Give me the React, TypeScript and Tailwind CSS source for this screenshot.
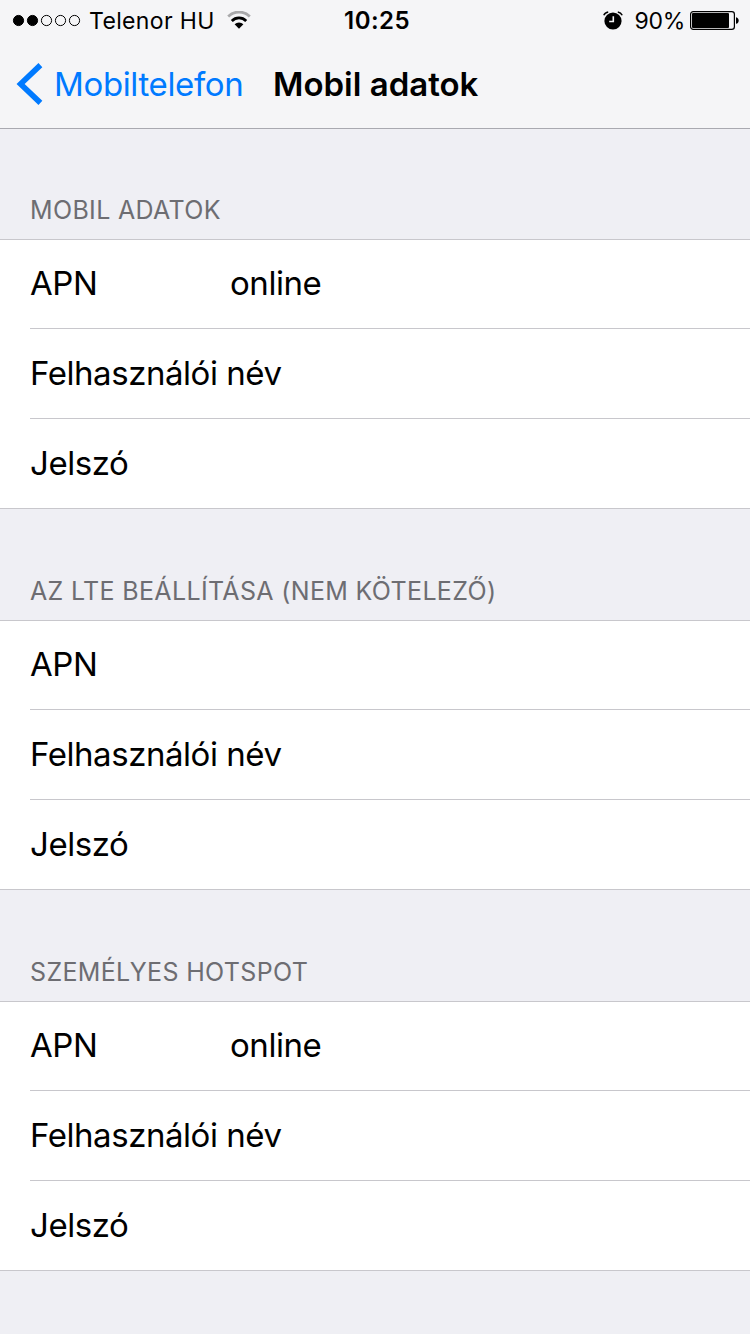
interface Row {
  label: string;
  value?: string;
}

interface Section {
  title: string;
  rows: Row[];
}

const sections: Section[] = [
  {
    title: 'Mobil adatok',
    rows: [{ label: 'APN', value: 'online' }, { label: 'Felhasználói név' }, { label: 'Jelszó' }],
  },
  {
    title: 'Az LTE beállítása (nem kötelező)',
    rows: [{ label: 'APN' }, { label: 'Felhasználói név' }, { label: 'Jelszó' }],
  },
  {
    title: 'Személyes hotspot',
    rows: [{ label: 'APN', value: 'online' }, { label: 'Felhasználói név' }, { label: 'Jelszó' }],
  },
];

function SignalDots() {
  return (
    <svg width="70" height="14" viewBox="0 0 70 14" className="shrink-0">
      {[0, 1, 2, 3, 4].map((i) => (
        <circle
          key={i}
          cx={6.5 + i * 14}
          cy="7.5"
          r="5.1"
          fill={i < 2 ? '#000' : 'none'}
          stroke="#000"
          strokeWidth="1"
        />
      ))}
    </svg>
  );
}

function WifiIcon() {
  return (
    <svg width="24" height="18" viewBox="0 0 24 18" fill="none" className="shrink-0">
      <path d="M1.2 5.4a15.6 15.6 0 0 1 21.6 0" stroke="#a9a9ab" strokeWidth="2.8" />
      <path d="M4.8 9.9a10.3 10.3 0 0 1 14.4 0" stroke="#000" strokeWidth="2.8" />
      <path d="M12 17.8 7.6 13.2a6.4 6.4 0 0 1 8.8 0Z" fill="#000" />
    </svg>
  );
}

function AlarmIcon() {
  return (
    <svg width="20" height="19" viewBox="0 0 20 19" fill="none" className="shrink-0">
      <circle cx="10" cy="10" r="8.6" fill="#000" />
      <path d="M10.3 5.2v5.3H6.2" stroke="#f5f5f7" strokeWidth="1.6" />
      <path d="M.8 4.3Q2 1.5 5.2 1M19.2 4.3Q18 1.5 14.8 1" stroke="#000" strokeWidth="1.5" />
    </svg>
  );
}

function BatteryIcon() {
  return (
    <svg width="50" height="19" viewBox="0 0 50 19" fill="none" className="shrink-0">
      <rect x=".6" y=".6" width="43.8" height="17.8" rx="2.6" stroke="#000" strokeWidth="1.2" />
      <rect x="2" y="2" width="37" height="15" rx="1" fill="#000" />
      <path d="M46 6.2c3.6.6 3.6 6 0 6.6Z" fill="#000" />
    </svg>
  );
}

function StatusBar() {
  return (
    <div className="grid h-10 grid-cols-[1fr_auto_1fr] items-center pr-[10px] pl-3 text-[23px] leading-none">
      <div className="flex items-center">
        <SignalDots />
        <span className="ml-[7px] w-[138px] pt-[2px] whitespace-nowrap tracking-[0.35px]">
          Telenor HU
        </span>
        <WifiIcon />
      </div>
      <span className="pt-[2px] pl-[2px] text-[24px] font-semibold tracking-[0.45px]">10:25</span>
      <div className="flex items-center justify-end">
        <AlarmIcon />
        <span className="mr-[5px] ml-[12px] pt-[2px] whitespace-nowrap tracking-[-0.3px]">90%</span>
        <BatteryIcon />
      </div>
    </div>
  );
}

function NavBar() {
  return (
    <header className="h-[129px] border-b border-[#a9a9b0] bg-[#f5f5f7]">
      <StatusBar />
      <div className="flex h-[88px] items-center pl-[15px] text-[33px] leading-none whitespace-nowrap">
        <button className="flex w-[258px] items-center text-[#007aff]">
          <svg width="28" height="42" viewBox="0 0 28 42" fill="none" className="shrink-0">
            <path d="M25.4 2.1 5.6 21l19.8 18.9" stroke="currentColor" strokeWidth="5.6" />
          </svg>
          <span className="ml-[11px] tracking-[-0.36px]">Mobiltelefon</span>
        </button>
        <h1 className="font-semibold">Mobil adatok</h1>
      </div>
    </header>
  );
}

function SettingsSection({ title, rows }: Section) {
  return (
    <section>
      <h2 className="flex h-28 items-end border-b border-[#c8c7cc] pb-[15px] pl-[30px] text-[25px] leading-7 tracking-[0.34px] whitespace-nowrap text-[#6d6d72] uppercase">
        {title}
      </h2>
      <ul className="border-b border-[#c8c7cc] bg-white pl-[30px]">
        {rows.map(({ label, value }) => (
          <li
            key={label}
            className="flex h-[90px] items-center border-b border-[#c8c7cc] text-[33px] leading-none tracking-[-0.45px] first:h-[89px] first:pb-px last:h-[89px] last:border-b-0"
          >
            <span className="min-w-[200px]">{label}</span>
            {value && <span>{value}</span>}
          </li>
        ))}
      </ul>
    </section>
  );
}

export default function App() {
  return (
    <div className="h-[1334px] w-[750px] overflow-hidden bg-[#efeff4] font-['Inter',sans-serif] text-black">
      <NavBar />
      <main className="-mt-px">
        {sections.map((section) => (
          <SettingsSection key={section.title} {...section} />
        ))}
      </main>
    </div>
  );
}
